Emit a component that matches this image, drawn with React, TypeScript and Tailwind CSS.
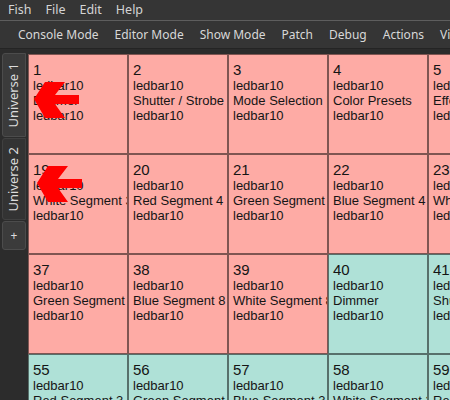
const menus = ["Fish", "File", "Edit", "Help"];
const tools = ["Console Mode", "Editor Mode", "Show Mode", "Patch", "Debug", "Actions", "Visualizer"];

type Cell = { n: number; name: string };

const rows: Cell[][] = [
  [
    { n: 1, name: "Dimmer" },
    { n: 2, name: "Shutter / Strobe" },
    { n: 3, name: "Mode Selection | Program" },
    { n: 4, name: "Color Presets" },
    { n: 5, name: "Effects" },
  ],
  [
    { n: 19, name: "White Segment 3" },
    { n: 20, name: "Red Segment 4" },
    { n: 21, name: "Green Segment 4" },
    { n: 22, name: "Blue Segment 4" },
    { n: 23, name: "White Segment 4" },
  ],
  [
    { n: 37, name: "Green Segment 8" },
    { n: 38, name: "Blue Segment 8" },
    { n: 39, name: "White Segment 8" },
    { n: 40, name: "Dimmer" },
    { n: 41, name: "Shutter / Strobe" },
  ],
  [
    { n: 55, name: "Red Segment 3" },
    { n: 56, name: "Green Segment 3" },
    { n: 57, name: "Blue Segment 3" },
    { n: 58, name: "White Segment 3" },
    { n: 59, name: "Red Segment 4" },
  ],
];

const ChannelCell = ({ cell }: { cell: Cell }) => {
  // fixture 1 covers channels 1-39, fixture 2 starts at 40
  const bg = cell.n < 40 ? "bg-[#feaba5]" : "bg-[#afe1d7]";
  return (
    <div className={`w-[100px] h-[100px] shrink-0 border border-black/50 ${bg} overflow-hidden pl-[4px] pt-[7px] text-[#151515]`}>
      <p className="text-[15px] leading-[16px] whitespace-nowrap">{cell.n}</p>
      <p className="text-[13px] leading-[15px] whitespace-nowrap">ledbar10</p>
      <p className="text-[13px] leading-[15px] whitespace-nowrap">{cell.name}</p>
      <p className="text-[13px] leading-[15px] whitespace-nowrap">ledbar10</p>
    </div>
  );
};

const Arrow = ({ x, y }: { x: number; y: number }) => (
  <svg className="absolute" style={{ left: x, top: y }} width="48" height="40" viewBox="0 0 48 40">
    <polygon points="1,18 12,1 32,1 22,14 46,14 46,23 22,23 32,37 12,37" fill="#ff0000" />
  </svg>
);

export default function App() {
  return (
    <div className="relative w-[450px] h-[400px] overflow-hidden bg-[#353535] flex flex-col font-['Noto_Sans',sans-serif]">
      {/* Menu bar */}
      <div className="h-[20px] flex items-center pl-[1px] text-[12.5px] text-[#d4d4d4]">
        {menus.map((m) => (
          <span key={m} className="px-[7px]">
            {m}
          </span>
        ))}
      </div>
      <div className="h-px bg-[#5e5e5e]" />

      {/* Toolbar */}
      <div className="h-[27px] flex items-center text-[12px] text-[#d8d8d8] whitespace-nowrap">
        <div className="w-[4px] h-[16px] ml-[3px] mr-[3px] shrink-0 bg-[radial-gradient(#8a8a8a_40%,transparent_45%)] bg-[length:2px_2px]" />
        {tools.map((t) => (
          <span key={t} className="px-[8px] shrink-0">
            {t}
          </span>
        ))}
      </div>

      {/* Main area */}
      <div className="flex-1 flex bg-[#2c2c2c] border-t border-[#242424] min-h-0">
        <div className="w-[27px] shrink-0 flex flex-col pt-[4px] pl-[2px] gap-[1px]">
          <div className="w-[24px] h-[84px] rounded-l-[3px] border border-[#4c4c4c] bg-[#3b3b3b] flex items-center justify-center">
            <span className="[writing-mode:vertical-rl] rotate-180 text-[13px] text-[#dcdcdc] whitespace-nowrap">Universe 1</span>
          </div>
          <div className="w-[24px] h-[82px] rounded-l-[3px] border border-[#404040] bg-[#333333] flex items-center justify-center">
            <span className="[writing-mode:vertical-rl] rotate-180 text-[13px] text-[#dcdcdc] whitespace-nowrap">Universe 2</span>
          </div>
          <div className="w-[24px] h-[29px] rounded-[3px] border border-[#4c4c4c] bg-[#3b3b3b] flex items-center justify-center text-[12px] text-[#dcdcdc]">
            +
          </div>
        </div>

        <div className="flex-1 overflow-hidden pt-[5px] pl-[1px] font-['Liberation_Sans',sans-serif]">
          {rows.map((row, i) => (
            <div key={i} className="flex">
              {row.map((c) => (
                <ChannelCell key={c.n} cell={c} />
              ))}
            </div>
          ))}
        </div>
      </div>

      <Arrow x={33} y={81} />
      <Arrow x={36} y={165} />
    </div>
  );
}
